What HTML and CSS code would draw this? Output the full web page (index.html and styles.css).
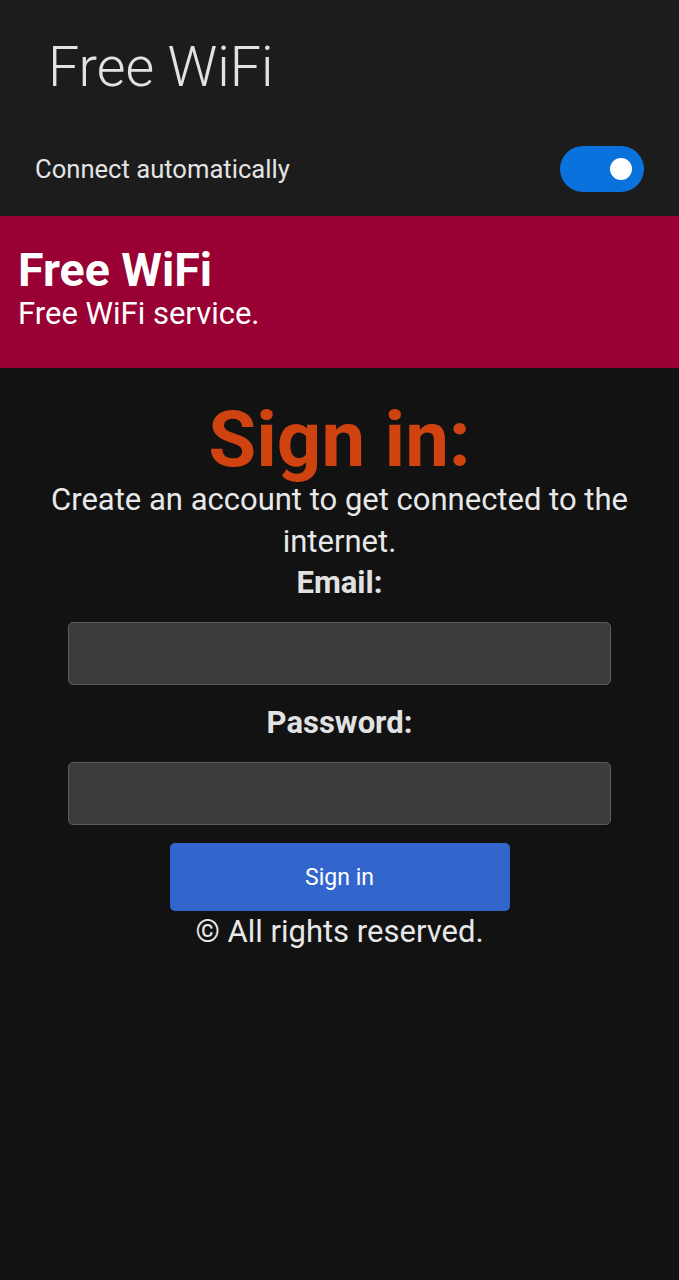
FILE: index.html
```html
<!DOCTYPE html>
<html lang="en">
<head>
<meta charset="utf-8">
<title>Free WiFi</title>
<link rel="stylesheet" href="styles.css">
</head>
<body>
<header class="top">
  <h1 class="top-title">Free WiFi</h1>
  <div class="auto-row">
    <span class="auto-label">Connect automatically</span>
    <span class="toggle"><span class="knob"></span></span>
  </div>
</header>
<section class="banner">
  <h2 class="banner-title">Free WiFi</h2>
  <p class="banner-sub">Free WiFi service.</p>
</section>
<main class="content">
  <h1 class="signin-title">Sign in:</h1>
  <p class="lead">Create an account to get connected to the internet.</p>
  <form class="form">
    <label class="label label-email" for="email">Email:</label>
    <input class="field" id="email" type="email">
    <label class="label label-pass" for="pass">Password:</label>
    <input class="field" id="pass" type="password">
    <button class="btn" type="button">Sign in</button>
  </form>
  <p class="footer">© All rights reserved.</p>
</main>
</body>
</html>
```
FILE: styles.css
```css
* { box-sizing: border-box; }
html, body {
  margin: 0;
  padding: 0;
  background: #121212;
  font-family: Roboto, "Liberation Sans", sans-serif;
}
body { min-height: 1280px; }

.top {
  background: #1c1c1c;
  padding: 35px 35px 24px 35px;
  display: flex;
  flex-direction: column;
}
.top-title {
  margin: 0 0 46px 13px;
  font-size: 55.5px;
  line-height: 65px;
  font-weight: 300;
  color: #e2e2e2;
}
.auto-row {
  display: flex;
  align-items: center;
  justify-content: space-between;
  height: 46px;
}
.auto-label {
  font-size: 25.6px;
  color: #e4e4e4;
}
.toggle {
  width: 84px;
  height: 46px;
  border-radius: 23px;
  background: #0a72dc;
  display: flex;
  align-items: center;
  justify-content: flex-end;
  padding-right: 12px;
}
.knob {
  width: 22px;
  height: 22px;
  border-radius: 50%;
  background: #ffffff;
}

.banner {
  background: #990033;
  padding: 27px 18px 37px 18px;
  color: #ffffff;
}
.banner-title {
  margin: 0;
  font-size: 46.5px;
  line-height: 54px;
  font-weight: 700;
}
.banner-sub {
  margin: 0;
  font-size: 31px;
  line-height: 34px;
}

.content {
  display: flex;
  flex-direction: column;
  align-items: center;
  text-align: center;
  color: #e8e8e8;
}
.signin-title {
  margin: 33px 0 0 0;
  font-size: 78px;
  line-height: 78px;
  font-weight: 700;
  color: #cf4311;
}
.lead {
  margin: 0;
  padding: 0 40px;
  font-size: 31px;
  line-height: 42px;
}
.form {
  display: flex;
  flex-direction: column;
  align-items: center;
  width: 100%;
}
.label {
  font-size: 31px;
  line-height: 36px;
  font-weight: 700;
  color: #e2e2e2;
}
.label-email { margin-top: 2px; }
.label-pass { margin-top: 20px; }
.field {
  display: block;
  width: 543px;
  height: 63px;
  margin-top: 21px;
  background: #3c3c3c;
  border: 1px solid #5c5c5c;
  border-radius: 5px;
}
.btn {
  width: 340px;
  height: 68px;
  margin-top: 18px;
  background: #3366cc;
  color: #ffffff;
  border: none;
  border-radius: 5px;
  font-family: Roboto, "Liberation Sans", sans-serif;
  font-size: 23px;
}
.footer {
  margin: 3px 0 0 0;
  font-size: 31px;
  line-height: 36px;
  color: #e8e8e8;
}
```
